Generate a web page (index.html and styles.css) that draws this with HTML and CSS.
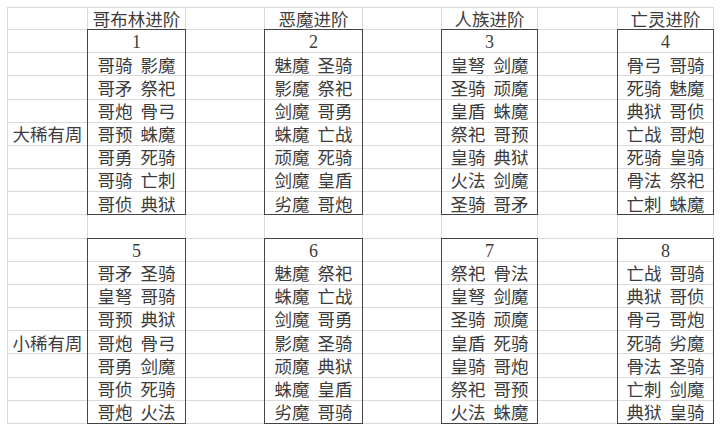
FILE: index.html
```html
<!DOCTYPE html>
<html lang="zh-CN">
<head>
<meta charset="utf-8">
<title>进阶</title>
<link rel="stylesheet" href="styles.css">
</head>
<body>
<div class="wrap">
<div class="sheet">
  <div class="c"></div><div class="c">哥布林进阶</div><div class="c"></div><div class="c">恶魔进阶</div><div class="c"></div><div class="c">人族进阶</div><div class="c"></div><div class="c">亡灵进阶</div>

  <div class="c"></div><div class="c n">1</div><div class="c"></div><div class="c n">2</div><div class="c"></div><div class="c n">3</div><div class="c"></div><div class="c n">4</div>
  <div class="c"></div><div class="c">哥骑 影魔</div><div class="c"></div><div class="c">魅魔 圣骑</div><div class="c"></div><div class="c">皇弩 剑魔</div><div class="c"></div><div class="c">骨弓 哥骑</div>
  <div class="c"></div><div class="c">哥矛 祭祀</div><div class="c"></div><div class="c">影魔 祭祀</div><div class="c"></div><div class="c">圣骑 顽魔</div><div class="c"></div><div class="c">死骑 魅魔</div>
  <div class="c"></div><div class="c">哥炮 骨弓</div><div class="c"></div><div class="c">剑魔 哥勇</div><div class="c"></div><div class="c">皇盾 蛛魔</div><div class="c"></div><div class="c">典狱 哥侦</div>
  <div class="c">大稀有周</div><div class="c">哥预 蛛魔</div><div class="c"></div><div class="c">蛛魔 亡战</div><div class="c"></div><div class="c">祭祀 哥预</div><div class="c"></div><div class="c">亡战 哥炮</div>
  <div class="c"></div><div class="c">哥勇 死骑</div><div class="c"></div><div class="c">顽魔 死骑</div><div class="c"></div><div class="c">皇骑 典狱</div><div class="c"></div><div class="c">死骑 皇骑</div>
  <div class="c"></div><div class="c">哥骑 亡刺</div><div class="c"></div><div class="c">剑魔 皇盾</div><div class="c"></div><div class="c">火法 剑魔</div><div class="c"></div><div class="c">骨法 祭祀</div>
  <div class="c"></div><div class="c">哥侦 典狱</div><div class="c"></div><div class="c">劣魔 哥炮</div><div class="c"></div><div class="c">圣骑 哥矛</div><div class="c"></div><div class="c">亡刺 蛛魔</div>

  <div class="c"></div><div class="c"></div><div class="c"></div><div class="c"></div><div class="c"></div><div class="c"></div><div class="c"></div><div class="c"></div>

  <div class="c"></div><div class="c n">5</div><div class="c"></div><div class="c n">6</div><div class="c"></div><div class="c n">7</div><div class="c"></div><div class="c n">8</div>
  <div class="c"></div><div class="c">哥矛 圣骑</div><div class="c"></div><div class="c">魅魔 祭祀</div><div class="c"></div><div class="c">祭祀 骨法</div><div class="c"></div><div class="c">亡战 哥骑</div>
  <div class="c"></div><div class="c">皇弩 哥骑</div><div class="c"></div><div class="c">蛛魔 亡战</div><div class="c"></div><div class="c">皇弩 剑魔</div><div class="c"></div><div class="c">典狱 哥侦</div>
  <div class="c"></div><div class="c">哥预 典狱</div><div class="c"></div><div class="c">剑魔 哥勇</div><div class="c"></div><div class="c">圣骑 顽魔</div><div class="c"></div><div class="c">骨弓 哥炮</div>
  <div class="c">小稀有周</div><div class="c">哥炮 骨弓</div><div class="c"></div><div class="c">影魔 圣骑</div><div class="c"></div><div class="c">皇盾 死骑</div><div class="c"></div><div class="c">死骑 劣魔</div>
  <div class="c"></div><div class="c">哥勇 剑魔</div><div class="c"></div><div class="c">顽魔 典狱</div><div class="c"></div><div class="c">皇骑 哥炮</div><div class="c"></div><div class="c">骨法 圣骑</div>
  <div class="c"></div><div class="c">哥侦 死骑</div><div class="c"></div><div class="c">蛛魔 皇盾</div><div class="c"></div><div class="c">祭祀 哥预</div><div class="c"></div><div class="c">亡刺 剑魔</div>
  <div class="c"></div><div class="c">哥炮 火法</div><div class="c"></div><div class="c">劣魔 哥骑</div><div class="c"></div><div class="c">火法 蛛魔</div><div class="c"></div><div class="c">典狱 皇骑</div>
</div>
<div class="frames">
  <div class="box b-col2 b-top"></div>
  <div class="box b-col4 b-top"></div>
  <div class="box b-col6 b-top"></div>
  <div class="box b-col8 b-top"></div>
  <div class="box b-col2 b-bot"></div>
  <div class="box b-col4 b-bot"></div>
  <div class="box b-col6 b-bot"></div>
  <div class="box b-col8 b-bot"></div>
</div>
</div>
</body>
</html>
```
FILE: styles.css
```css
html, body {
  margin: 0;
  padding: 0;
  background: #ffffff;
}

.wrap {
  display: grid;
  margin: 7px 0 0 7px;
  width: 707px;
}

.sheet,
.frames {
  grid-area: 1 / 1;
  display: grid;
  grid-template-columns: 80px 98px 79px 98px 79px 96px 80px 96px;
  grid-template-rows: 22px repeat(17, 23.18px);
  border-left: 1px solid transparent;
  border-top: 1px solid transparent;
}

.sheet {
  border-left-color: #dadada;
  border-top-color: #dadada;
  font-family: "Noto Sans CJK SC", sans-serif;
  font-weight: 400;
  font-size: 17.5px;
  color: #3c3c3c;
}

.frames {
  pointer-events: none;
}

.c {
  box-sizing: border-box;
  border-right: 1px solid #dadada;
  border-bottom: 1px solid #dadada;
  display: flex;
  align-items: center;
  justify-content: center;
  line-height: 1;
  white-space: nowrap;
  word-spacing: 4px;
}

.n {
  font-family: "Liberation Serif", serif;
  font-size: 18px;
  font-weight: 400;
  padding-top: 2px;
}

.box {
  box-sizing: border-box;
  border: 1px solid #444444;
  margin: -1px 0 0 -1px;
}

.b-col2 { grid-column: 2; }
.b-col4 { grid-column: 4; }
.b-col6 { grid-column: 6; }
.b-col8 { grid-column: 8; }
.b-top { grid-row: 2 / 10; }
.b-bot { grid-row: 11 / 19; }
```
